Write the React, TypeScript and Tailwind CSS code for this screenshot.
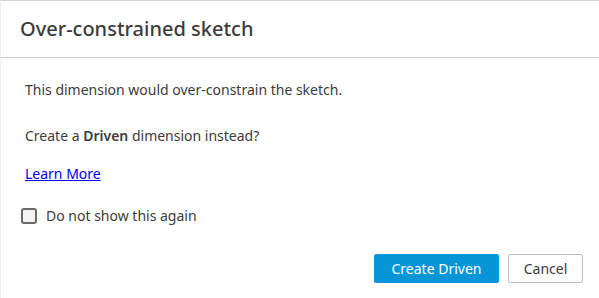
export default function App() {
  return (
    <div
      className="w-[599px] h-[298px] bg-white border-t border-l border-t-[#d4d4d4] border-l-[#eeeeee] flex flex-col text-[#3c3c3c]"
      style={{ fontFamily: '"Noto Sans", "Open Sans", sans-serif' }}
    >
      <div className="h-[57px] border-b border-[#cccccc] flex items-center px-[19px] shrink-0">
        <h1 className="text-[20px] font-medium leading-none -mt-[1px]">Over-constrained sketch</h1>
      </div>
      <div className="flex flex-col px-[24px] pt-[22px] text-[14px] leading-[20px]">
        <p>This dimension would over-constrain the sketch.</p>
        <p className="mt-[26px]">
          Create a <b className="font-semibold">Driven</b> dimension instead?
        </p>
        <a href="#" className="mt-[18px] text-[#0000ee] underline w-fit">Learn More</a>
        <label className="mt-[22px] flex items-center gap-[9px] -ml-[4px]">
          <span className="w-[16px] h-[16px] rounded-[3px] border-2 border-[#6b6b6b] bg-[#f3f3f3]" />
          <span>Do not show this again</span>
        </label>
      </div>
      <div className="mt-auto flex justify-end gap-[9px] pr-[16px] pb-[15px]">
        <button className="h-[29px] w-[125px] bg-[#0696d7] text-white text-[14px] rounded-[2px]">Create Driven</button>
        <button className="h-[29px] w-[75px] bg-white border border-[#bfbfbf] text-[14px] rounded-[2px]">Cancel</button>
      </div>
    </div>
  );
}
